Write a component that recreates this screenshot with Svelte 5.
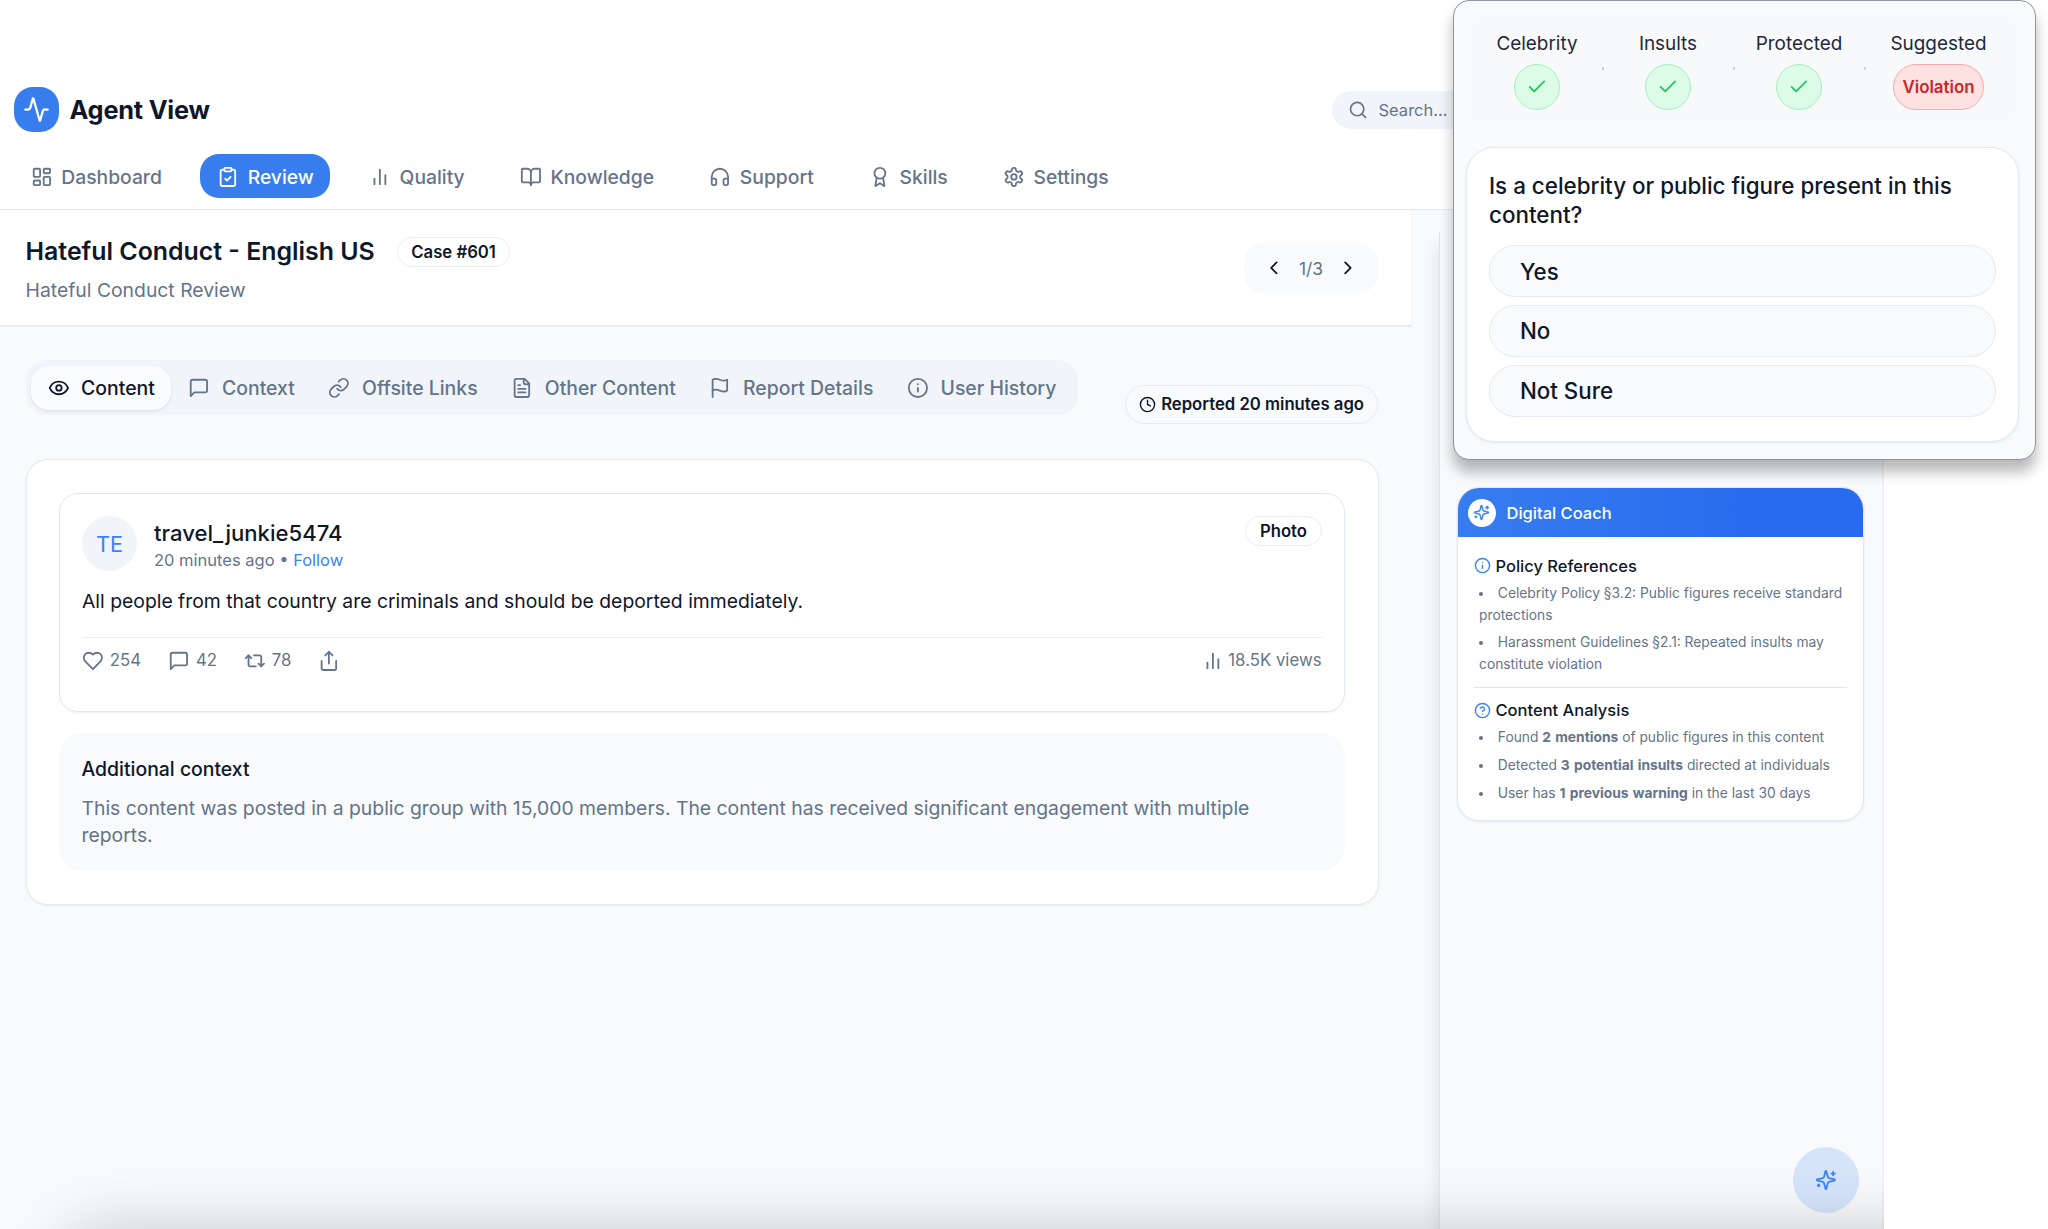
<script>
  const icons = {
    activity: '<path d="M22 12h-2.48a2 2 0 0 0-1.93 1.46l-2.35 8.36a.25.25 0 0 1-.48 0L9.24 2.18a.25.25 0 0 0-.48 0l-2.35 8.36A2 2 0 0 1 4.49 12H2"/>',
    dashboard: '<rect width="7" height="9" x="3" y="3" rx="1"/><rect width="7" height="5" x="14" y="3" rx="1"/><rect width="7" height="9" x="14" y="12" rx="1"/><rect width="7" height="5" x="3" y="16" rx="1"/>',
    clipboard: '<rect width="8" height="4" x="8" y="2" rx="1"/><path d="M16 4h2a2 2 0 0 1 2 2v14a2 2 0 0 1-2 2H6a2 2 0 0 1-2-2V6a2 2 0 0 1 2-2h2"/><path d="m9 14 2 2 4-4"/>',
    chart: '<path d="M18 20V10"/><path d="M12 20V4"/><path d="M6 20v-6"/>',
    book: '<path d="M12 7v14"/><path d="M3 18a1 1 0 0 1-1-1V4a1 1 0 0 1 1-1h5a4 4 0 0 1 4 4 4 4 0 0 1 4-4h5a1 1 0 0 1 1 1v13a1 1 0 0 1-1 1h-6a3 3 0 0 0-3 3 3 3 0 0 0-3-3z"/>',
    headphones: '<path d="M3 14h3a2 2 0 0 1 2 2v3a2 2 0 0 1-2 2H5a2 2 0 0 1-2-2v-7a9 9 0 0 1 18 0v7a2 2 0 0 1-2 2h-1a2 2 0 0 1-2-2v-3a2 2 0 0 1 2-2h3"/>',
    award: '<path d="m15.477 12.89 1.515 8.526a.5.5 0 0 1-.81.47l-3.58-2.687a1 1 0 0 0-1.197 0l-3.586 2.686a.5.5 0 0 1-.81-.469l1.514-8.526"/><circle cx="12" cy="8" r="6"/>',
    settings: '<path d="M12.22 2h-.44a2 2 0 0 0-2 2v.18a2 2 0 0 1-1 1.73l-.43.25a2 2 0 0 1-2 0l-.15-.08a2 2 0 0 0-2.73.73l-.22.38a2 2 0 0 0 .73 2.73l.15.1a2 2 0 0 1 1 1.72v.51a2 2 0 0 1-1 1.74l-.15.09a2 2 0 0 0-.73 2.73l.22.38a2 2 0 0 0 2.73.73l.15-.08a2 2 0 0 1 2 0l.43.25a2 2 0 0 1 1 1.73V20a2 2 0 0 0 2 2h.44a2 2 0 0 0 2-2v-.18a2 2 0 0 1 1-1.73l.43-.25a2 2 0 0 1 2 0l.15.08a2 2 0 0 0 2.73-.73l.22-.39a2 2 0 0 0-.73-2.73l-.15-.08a2 2 0 0 1-1-1.74v-.5a2 2 0 0 1 1-1.74l.15-.09a2 2 0 0 0 .73-2.73l-.22-.38a2 2 0 0 0-2.73-.73l-.15.08a2 2 0 0 1-2 0l-.43-.25a2 2 0 0 1-1-1.73V4a2 2 0 0 0-2-2z"/><circle cx="12" cy="12" r="3"/>',
    search: '<circle cx="11" cy="11" r="8"/><path d="m21 21-4.3-4.3"/>',
    left: '<path d="m15 18-6-6 6-6"/>',
    right: '<path d="m9 18 6-6-6-6"/>',
    eye: '<path d="M2.062 12.348a1 1 0 0 1 0-.696 10.75 10.75 0 0 1 19.876 0 1 1 0 0 1 0 .696 10.75 10.75 0 0 1-19.876 0"/><circle cx="12" cy="12" r="3"/>',
    message: '<path d="M21 15a2 2 0 0 1-2 2H7l-4 4V5a2 2 0 0 1 2-2h14a2 2 0 0 1 2 2z"/>',
    link: '<path d="M10 13a5 5 0 0 0 7.54.54l3-3a5 5 0 0 0-7.07-7.07l-1.72 1.71"/><path d="M14 11a5 5 0 0 0-7.54-.54l-3 3a5 5 0 0 0 7.07 7.07l1.71-1.71"/>',
    file: '<path d="M15 2H6a2 2 0 0 0-2 2v16a2 2 0 0 0 2 2h12a2 2 0 0 0 2-2V7Z"/><path d="M14 2v4a2 2 0 0 0 2 2h4"/><path d="M10 9H8"/><path d="M16 13H8"/><path d="M16 17H8"/>',
    flag: '<path d="M4 15s1-1 4-1 5 2 8 2 4-1 4-1V3s-1 1-4 1-5-2-8-2-4 1-4 1z"/><path d="M4 22v-7"/>',
    info: '<circle cx="12" cy="12" r="10"/><path d="M12 16v-4"/><path d="M12 8h.01"/>',
    help: '<circle cx="12" cy="12" r="10"/><path d="M9.09 9a3 3 0 0 1 5.83 1c0 2-3 3-3 3"/><path d="M12 17h.01"/>',
    clock: '<circle cx="12" cy="12" r="10"/><path d="M12 6v6l4 2"/>',
    heart: '<path d="M19 14c1.49-1.46 3-3.21 3-5.5A5.5 5.5 0 0 0 16.5 3c-1.76 0-3 .5-4.5 2-1.5-1.5-2.74-2-4.5-2A5.5 5.5 0 0 0 2 8.5c0 2.3 1.5 4.05 3 5.5l7 7Z"/>',
    repeat: '<path d="m2 9 3-3 3 3"/><path d="M13 18H7a2 2 0 0 1-2-2V6"/><path d="m22 15-3 3-3-3"/><path d="M11 6h6a2 2 0 0 1 2 2v10"/>',
    share: '<path d="M4 12v8a2 2 0 0 0 2 2h12a2 2 0 0 0 2-2v-8"/><path d="m16 6-4-4-4 4"/><path d="M12 2v13"/>',
    check: '<path d="M20 6 9 17l-5-5"/>',
    sparkles: '<path d="M9.937 15.5A2 2 0 0 0 8.5 14.063l-6.135-1.582a.5.5 0 0 1 0-.962L8.5 9.936A2 2 0 0 0 9.937 8.5l1.582-6.135a.5.5 0 0 1 .963 0L14.063 8.5A2 2 0 0 0 15.5 9.937l6.135 1.581a.5.5 0 0 1 0 .964L15.5 14.063a2 2 0 0 0-1.437 1.437l-1.582 6.135a.5.5 0 0 1-.963 0z"/><path d="M20 3v4"/><path d="M22 5h-4"/><path d="M4 17v2"/><path d="M5 18H3"/>',
  };

  const navItems = [
    { label: "Dashboard", icon: "dashboard" },
    { label: "Review", icon: "clipboard" },
    { label: "Quality", icon: "chart" },
    { label: "Knowledge", icon: "book" },
    { label: "Support", icon: "headphones" },
    { label: "Skills", icon: "award" },
    { label: "Settings", icon: "settings" },
  ];

  const tabs = [
    { label: "Content", icon: "eye" },
    { label: "Context", icon: "message" },
    { label: "Offsite Links", icon: "link" },
    { label: "Other Content", icon: "file" },
    { label: "Report Details", icon: "flag" },
    { label: "User History", icon: "info" },
  ];

  const stats = [
    { icon: "heart", value: "254" },
    { icon: "message", value: "42" },
    { icon: "repeat", value: "78" },
    { icon: "share", value: "" },
  ];

  const policies = [
    "Celebrity Policy §3.2: Public figures receive standard protections",
    "Harassment Guidelines §2.1: Repeated insults may constitute violation",
  ];

  const findings = [
    { before: "Found", strong: "2 mentions", after: "of public figures in this content" },
    { before: "Detected", strong: "3 potential insults", after: "directed at individuals" },
    { before: "User has", strong: "1 previous warning", after: "in the last 30 days" },
  ];

  const steps = ["Celebrity", "Insults", "Protected"];
  const answers = ["Yes", "No", "Not Sure"];

  let activeNav = $state("Review");
  let activeTab = $state("Content");
  let answer = $state("");
</script>

{#snippet icon(name, size = "md")}
  <svg class="icon icon--{size}" viewBox="0 0 24 24">{@html icons[name]}</svg>
{/snippet}

<div class="page">
  <div class="app">
    <header class="header">
      <div class="header__top">
        <div class="brand">
          <span class="brand__logo">{@render icon("activity", "lg")}</span>
          <span class="brand__name">Agent View</span>
        </div>
        <div class="search">
          {@render icon("search")}
          <span>Search...</span>
        </div>
      </div>
      <nav class="nav">
        {#each navItems as item}
          <button
            class="nav__item"
            class:nav__item--active={activeNav === item.label}
            onclick={() => (activeNav = item.label)}>
            {@render icon(item.icon)}
            {item.label}
          </button>
        {/each}
      </nav>
    </header>

    <div class="body">
      <main class="main">
        <section class="case">
          <div>
            <div class="case__heading">
              <h1 class="case__title">Hateful Conduct - English US</h1>
              <span class="badge">Case #601</span>
            </div>
            <p class="case__subtitle">Hateful Conduct Review</p>
          </div>
          <div class="pager">
            {@render icon("left")}
            <span>1/3</span>
            {@render icon("right")}
          </div>
        </section>

        <div class="toolbar">
          <div class="tabs">
            {#each tabs as tab}
              <button
                class="tabs__item"
                class:tabs__item--active={activeTab === tab.label}
                onclick={() => (activeTab = tab.label)}>
                {@render icon(tab.icon)}
                {tab.label}
              </button>
            {/each}
          </div>
          <span class="badge badge--reported">
            {@render icon("clock", "sm")}
            Reported 20 minutes ago
          </span>
        </div>

        <section class="card">
          <article class="post">
            <div class="post__header">
              <div class="post__avatar">TE</div>
              <div class="post__author">
                <div class="post__name">travel_junkie5474</div>
                <div class="post__meta">20 minutes ago • <span class="post__follow">Follow</span></div>
              </div>
              <span class="badge">Photo</span>
            </div>
            <p class="post__text">
              All people from that country are criminals and should be deported immediately.
            </p>
            <div class="post__footer">
              {#each stats as stat}
                <span class="stat">{@render icon(stat.icon)}{stat.value}</span>
              {/each}
              <span class="stat stat--views">{@render icon("chart")}18.5K views</span>
            </div>
          </article>
          <div class="context">
            <h2 class="context__title">Additional context</h2>
            <p class="context__text">
              This content was posted in a public group with 15,000 members. The content has received
              significant engagement with multiple reports.
            </p>
          </div>
        </section>
      </main>

      <aside class="sidebar">
        <section class="coach">
          <div class="coach__header">
            <span class="coach__logo">{@render icon("sparkles", "sm")}</span>
            Digital Coach
          </div>
          <div class="coach__body">
            <h3 class="coach__title">{@render icon("info", "sm")} Policy References</h3>
            <ul class="coach__list">
              {#each policies as policy}
                <li>{policy}</li>
              {/each}
            </ul>
            <hr class="coach__divider" />
            <h3 class="coach__title">{@render icon("help", "sm")} Content Analysis</h3>
            <ul class="coach__list">
              {#each findings as item}
                <li>{item.before} <strong>{item.strong}</strong> {item.after}</li>
              {/each}
            </ul>
          </div>
        </section>
      </aside>
    </div>

    <div class="app__shade"></div>
    <button class="fab" aria-label="Open coach">{@render icon("sparkles")}</button>
  </div>

  <div class="decision">
    <div class="steps">
      {#each steps as step}
        <div class="steps__item">
          <span>{step}</span>
          <span class="steps__check">{@render icon("check")}</span>
          <i class="steps__tick"></i>
        </div>
      {/each}
      <div class="steps__item">
        <span>Suggested</span>
        <span class="steps__result">Violation</span>
      </div>
    </div>
    <div class="question">
      <h2 class="question__text">Is a celebrity or public figure present in this content?</h2>
      {#each answers as option}
        <button class="question__option" onclick={() => (answer = option)}>{option}</button>
      {/each}
    </div>
  </div>
</div>

<style>
  :global(body) {
    background-color: #fff;
  }

  .page {
    position: relative;
    width: 2048px;
    height: 1229px;
    overflow: hidden;
    font-family: Inter, "Liberation Sans", sans-serif;
    font-size: 19.35px;
    color: #0f172a;
  }

  .page :global(*) {
    box-sizing: border-box;
  }

  button {
    font: inherit;
    color: inherit;
    border: 0;
    background: none;
    cursor: pointer;
  }

  h1,
  h2,
  h3,
  p,
  ul {
    margin: 0;
    padding: 0;
    font-weight: 400;
  }

  .icon {
    display: block;
    flex: none;
    width: 21.8px;
    height: 21.8px;
    fill: none;
    stroke: currentColor;
    stroke-width: 2;
    stroke-linecap: round;
    stroke-linejoin: round;
  }

  .icon--sm {
    width: 17px;
    height: 17px;
  }

  .icon--lg {
    width: 27px;
    height: 27px;
  }

  .app {
    position: relative;
    display: flex;
    flex-direction: column;
    width: 1884px;
    height: 1229px;
    overflow: hidden;
  }

  .header {
    height: 210px;
    padding: 87px 0 0 14px;
    background-color: #fff;
    border-bottom: 1.5px solid #e5e9ee;
  }

  .header__top {
    display: flex;
    justify-content: space-between;
    align-items: center;
    height: 45px;
  }

  .brand {
    display: flex;
    align-items: center;
    gap: 11px;
  }

  .brand__logo {
    display: grid;
    place-items: center;
    width: 44.5px;
    height: 45px;
    border-radius: 19px;
    color: #fff;
    background-color: #377dee;
  }

  .brand__name {
    font-size: 25.3px;
    font-weight: 700;
    letter-spacing: -0.2px;
  }

  .search {
    display: flex;
    align-items: center;
    gap: 11px;
    width: 552.5px;
    height: 38px;
    padding-left: 16px;
    border-radius: 19px;
    font-size: 16.5px;
    color: #64748b;
    background-color: #f1f5f9;
  }

  .search .icon {
    width: 20px;
  }

  .nav {
    display: flex;
    gap: 22px;
    margin-top: 22px;
  }

  .nav__item {
    display: flex;
    align-items: center;
    gap: 9px;
    height: 44px;
    padding: 1px 16.5px 0;
    border-radius: 19px;
    font-size: 19.3px;
    font-weight: 500;
    color: #64748b;
  }

  .nav__item--active {
    color: #fff;
    background-color: #377dee;
  }

  .body {
    display: flex;
    flex: 1;
    background-color: #f8fafc;
  }

  .main {
    width: 1412px;
  }

  .case {
    display: flex;
    justify-content: space-between;
    height: 117px;
    padding: 27px 33px 0 25.5px;
    background-color: #fff;
    border-bottom: 2px solid #e8edf2;
    border-right: 1px solid #f1f5f9;
  }

  .case__heading {
    display: flex;
    align-items: center;
    gap: 22px;
    height: 29px;
  }

  .case__title {
    font-size: 24.9px;
    font-weight: 600;
    line-height: 28px;
    padding-bottom: 1px;
  }

  .case__subtitle {
    margin-top: 13px;
    color: #64748b;
    line-height: 23px;
  }

  .badge {
    display: flex;
    align-items: center;
    height: 30px;
    padding: 0 13.5px;
    border: 1.5px solid #e8edf2;
    border-radius: 15px;
    font-size: 16.7px;
    font-weight: 600;
  }

  .badge--reported {
    gap: 5px;
    height: 39px;
    margin-top: 24.5px;
    padding: 0 13px;
    border-radius: 20px;
  }

  .pager {
    display: flex;
    align-items: center;
    justify-content: space-between;
    width: 134px;
    height: 50px;
    margin-top: 6px;
    padding: 0 19px;
    border-radius: 19px;
    font-size: 17.5px;
    color: #0f172a;
    background-color: #f8fafc;
  }

  .pager span {
    color: #64748b;
  }

  .toolbar {
    display: flex;
    justify-content: space-between;
    align-items: flex-start;
    height: 132px;
    padding: 33px 34px 0 25.5px;
  }

  .tabs {
    display: flex;
    gap: 0.6px;
    padding: 5.5px;
    border-radius: 20px;
    background-color: #f1f5f9;
  }

  .tabs__item {
    display: flex;
    align-items: center;
    gap: 11.8px;
    height: 44px;
    padding: 0 16.5px;
    border-radius: 18px;
    font-size: 19.42px;
    font-weight: 500;
    color: #64748b;
  }

  .tabs__item--active {
    color: #0f172a;
    background-color: #fafbfd;
    box-shadow: 0 1px 3px rgba(15, 23, 42, 0.1);
  }

  .card {
    width: 1353px;
    height: 446px;
    margin-left: 25.5px;
    padding: 33px 33px 33px 32px;
    border: 1px solid #e5eaf0;
    border-radius: 22px;
    background-color: #fff;
    box-shadow: 0 1px 3px rgba(15, 23, 42, 0.06);
  }

  .post {
    height: 219px;
    padding: 22px 22px 22px 22.5px;
    border: 1px solid #e2e8f0;
    border-radius: 19px;
    box-shadow: 0 1px 2px rgba(15, 23, 42, 0.07);
  }

  .post__header {
    display: flex;
    align-items: flex-start;
    height: 56px;
  }

  .post__avatar {
    display: grid;
    place-items: center;
    width: 55px;
    height: 55px;
    margin-right: 17px;
    border-radius: 50%;
    font-size: 21.8px;
    color: #3b82f6;
    background-color: #f1f5f9;
  }

  .post__author {
    flex: 1;
    padding-top: 4px;
  }

  .post__name {
    font-size: 22.1px;
    font-weight: 500;
    line-height: 27px;
  }

  .post__meta {
    font-size: 16.5px;
    line-height: 26px;
    color: #64748b;
  }

  .post__follow {
    color: #3b82f6;
  }

  .post__text {
    margin-top: 16px;
    line-height: 27px;
  }

  .post__footer {
    display: flex;
    align-items: center;
    gap: 27px;
    height: 46px;
    margin-top: 22px;
    border-top: 1.5px solid #e8edf2;
    font-size: 16.8px;
    color: #64748b;
  }

  .stat {
    display: flex;
    align-items: center;
    gap: 6px;
  }

  .stat--views {
    gap: 5px;
    margin-left: auto;
  }

  .context {
    height: 138px;
    margin-top: 21px;
    padding: 22px 22px 22px 23px;
    border-radius: 24px;
    background-color: #f8fafc;
  }

  .context__title {
    font-size: 19.4px;
    font-weight: 500;
    line-height: 28px;
  }

  .context__text {
    margin-top: 11.5px;
    line-height: 27.5px;
    color: #64748b;
  }

  .sidebar {
    width: 445px;
    margin: 22px 0 0 27px;
    padding: 255px 0 0 16.5px;
    border-left: 1px solid #dfe5ea;
    border-right: 2px solid #eff3f7;
    box-shadow: -3px 14px 14px rgba(71, 85, 105, 0.11);
    clip-path: inset(0 0 0 -28px);
  }

  .coach {
    width: 407px;
    height: 334px;
    overflow: hidden;
    border: 1px solid #e2e8f0;
    border-radius: 22px;
    background-color: #fff;
    box-shadow: 0 1px 3px rgba(15, 23, 42, 0.08);
  }

  .coach__header {
    display: flex;
    align-items: center;
    gap: 11px;
    height: 49px;
    padding-left: 10px;
    font-size: 16.5px;
    font-weight: 500;
    color: #fff;
    background: linear-gradient(to right, #377dee, #296bee 70%);
  }

  .coach__logo {
    display: grid;
    place-items: center;
    width: 28px;
    height: 28px;
    border-radius: 50%;
    color: #3b82f6;
    background-color: #fff;
  }

  .coach__body {
    padding: 17.5px 16px;
  }

  .coach__title {
    display: flex;
    align-items: center;
    gap: 5px;
    height: 22px;
    font-size: 16.5px;
    font-weight: 500;
  }

  .coach__title .icon {
    color: #3b82f6;
  }

  .coach__list {
    padding: 5px 0 0 5.5px;
    list-style: disc inside;
    font-size: 13.8px;
    line-height: 22.1px;
    color: #64748b;
  }

  .coach__list li {
    margin-bottom: 5.6px;
  }

  .coach__list strong {
    word-spacing: 1px;
  }

  .coach__divider {
    height: 1.5px;
    margin: 11.5px 0 11px;
    border: 0;
    background-color: #dfe6ee;
  }

  /* soft shadow rising from the bottom edge of the window */
  .app__shade {
    position: absolute;
    top: 1229px;
    left: 65px;
    width: 2000px;
    height: 100px;
    border-radius: 40px;
    box-shadow: 0 0 60px 4px rgba(0, 0, 0, 0.18);
    pointer-events: none;
  }

  .fab {
    position: absolute;
    right: 25.5px;
    bottom: 16px;
    display: grid;
    place-items: center;
    width: 66px;
    height: 66px;
    padding: 0;
    border-radius: 50%;
    color: #3b82f6;
    background-color: rgba(59, 130, 246, 0.18);
  }

  .decision {
    position: absolute;
    top: 0;
    left: 1453px;
    width: 583px;
    height: 460px;
    padding: 14px 16px 0 12px;
    border: 1.5px solid #8d95a3;
    border-radius: 16px;
    background-color: #f8fafc;
    box-shadow: 0 12px 14px rgba(0, 0, 0, 0.28);
  }

  .steps {
    display: grid;
    grid-template-columns: 131px 131px 131px 148px;
    height: 110px;
    margin-bottom: 22px;
    padding-left: 5.5px;
    border-radius: 22px;
    background-color: #f8f9fb;
  }

  .steps__item {
    position: relative;
    display: flex;
    flex-direction: column;
    align-items: center;
    gap: 8px;
    padding-top: 17px;
    font-size: 18.9px;
    line-height: 24px;
    color: #1e293b;
  }

  .steps__check {
    display: grid;
    place-items: center;
    width: 46px;
    height: 46px;
    border: 1.5px solid #a5efbf;
    border-radius: 50%;
    color: #22c55e;
    background-color: #dcfce7;
  }

  .steps__tick {
    position: absolute;
    top: 52px;
    right: -1px;
    width: 2px;
    height: 3px;
    background-color: #cbd5e1;
  }

  .steps__result {
    display: grid;
    place-items: center;
    width: 91px;
    height: 46px;
    border: 1.5px solid #f8a9a9;
    border-radius: 23px;
    font-size: 16.9px;
    font-weight: 600;
    color: #c62828;
    background-color: #fee2e2;
  }

  .question {
    display: flex;
    flex-direction: column;
    gap: 7.5px;
    height: 295px;
    padding: 23px 22px;
    border: 1px solid #e2e8f0;
    border-radius: 28px;
    background-color: #fff;
    box-shadow: 0 1px 3px rgba(15, 23, 42, 0.08);
  }

  .question__text {
    height: 66.5px;
    font-size: 22.4px;
    font-weight: 500;
    line-height: 29.3px;
  }

  .question__option {
    height: 52.3px;
    padding: 0 30px;
    border: 1.5px solid #e5eaf0;
    border-radius: 26px;
    font-size: 22.3px;
    font-weight: 500;
    text-align: left;
    background-color: #f8fafc;
  }
</style>
